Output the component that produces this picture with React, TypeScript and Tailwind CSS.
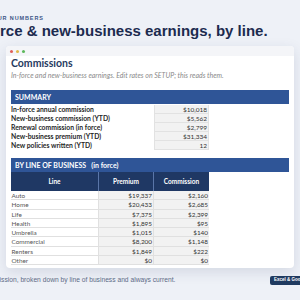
import React from "react";

const summary: [string, string][] = [
  ["In-force annual commission", "$10,018"],
  ["New-business commission (YTD)", "$5,562"],
  ["Renewal commission (in force)", "$2,799"],
  ["New-business premium (YTD)", "$31,334"],
  ["New policies written (YTD)", "12"],
];

const lines: [string, string, string][] = [
  ["Auto", "$19,337", "$2,160"],
  ["Home", "$20,433", "$2,685"],
  ["Life", "$7,375", "$2,399"],
  ["Health", "$1,895", "$95"],
  ["Umbrella", "$1,015", "$140"],
  ["Commercial", "$8,200", "$1,148"],
  ["Renters", "$1,849", "$222"],
  ["Other", "$0", "$0"],
];

export default function App() {
  return (
    <div className="w-[300px] h-[300px] overflow-hidden bg-[#eef1f7] font-['Liberation_Sans',Arial,sans-serif]">
      <div className="pt-[15px]">
        <div className="-ml-[12px] whitespace-nowrap h-[6px] leading-[6px] text-[5.5px] font-bold tracking-[0.16em] text-[#3d5687]">
          YOUR NUMBERS
        </div>
        <div className="mt-[1px] -ml-[32.5px] whitespace-nowrap h-[17px] leading-[17px] text-[15px] font-bold text-[#1c2b4f]">
          In-force &amp; new-business earnings, by line.
        </div>
      </div>

      <div className="mt-[7px] mx-[6px] h-[222px] bg-white rounded-[4px] shadow-[0_4px_14px_rgba(30,50,90,0.13)] overflow-hidden font-['Lato',sans-serif]">
        <div className="h-[10px] bg-[#f4f5f8] flex items-center gap-[3px] pl-[4px]">
          <span className="w-[3px] h-[3px] rounded-full bg-[#e0605a]" />
          <span className="w-[3px] h-[3px] rounded-full bg-[#e2b84a]" />
          <span className="w-[3px] h-[3px] rounded-full bg-[#5bb85a]" />
        </div>
        <div className="px-[5px]">
          <div className="mt-[1px] h-[13px] leading-[13px] text-[10.5px] font-bold text-[#253a60]">
            Commissions
          </div>
          <div className="mt-[1px] h-[8px] leading-[8px] text-[7px] italic text-[#8a8a8a] whitespace-nowrap">
            In-force and new-business earnings. Edit rates on SETUP; this reads them.
          </div>
          <div className="mt-[11px] h-[14px] bg-[#2f5597] flex items-center pl-[4px] text-[7px] font-bold text-white">
            SUMMARY
          </div>
          <div className="mt-[1px]">
            {summary.map(([k, v]) => (
              <div key={k} className="flex h-[9px] leading-[9px]">
                <div className="w-[143px] font-bold text-[#262626] whitespace-nowrap text-[6.8px]">{k}</div>
                <div className="w-[55px] bg-[#f2f2f2] border-b border-x border-[#e2e2e2] text-right pr-[1px] text-[#333] text-[6.5px]">
                  {v}
                </div>
              </div>
            ))}
          </div>
          <div className="mt-[8px] h-[14px] bg-[#2f5597] flex items-center pl-[4px] text-[7px] font-bold text-white whitespace-pre">
            BY LINE OF BUSINESS   (in force)
          </div>
          <div className="flex h-[19px] text-[6.5px] font-bold text-white">
            <div className="w-[88px] bg-[#1f3864] border-r border-[#5a76a8] flex items-center justify-center">Line</div>
            <div className="w-[55px] bg-[#1f3864] border-r border-[#5a76a8] flex items-center justify-center">Premium</div>
            <div className="w-[55px] bg-[#1f3864] flex items-center justify-center">Commission</div>
          </div>
          {lines.map(([l, p, c]) => (
            <div key={l} className="flex h-[9.25px] leading-[9px] text-[6.4px]">
              <div className="w-[88px] border-b border-r border-[#e0e0e0] text-[#555] pl-[0.5px]">{l}</div>
              <div className="w-[55px] bg-[#f2f2f2] border-b border-r border-[#e0e0e0] text-right pr-[1px] text-[#333]">{p}</div>
              <div className="w-[55px] bg-[#f2f2f2] border-b border-[#e0e0e0] text-right pr-[1px] text-[#333]">{c}</div>
            </div>
          ))}
        </div>
      </div>

      <div className="mt-[7px] flex items-center justify-between">
        <div className="-ml-[34px] whitespace-nowrap h-[10px] leading-[10px] text-[6.7px] text-[#5d6b86]">
          Your commission, broken down by line of business and always current.
        </div>
        <div className="-mr-[27px] h-[9px] rounded-[2px] bg-[#1f3a60] px-[4px] flex items-center text-[4.5px] font-bold text-white whitespace-nowrap">
          Excel &amp; Google Sheets
        </div>
      </div>
    </div>
  );
}
